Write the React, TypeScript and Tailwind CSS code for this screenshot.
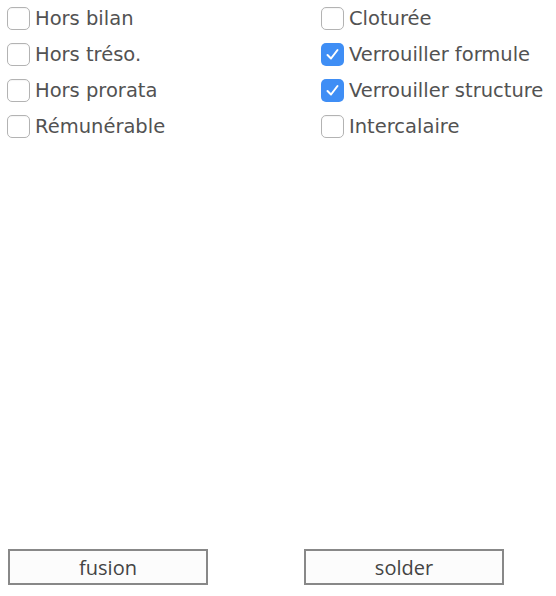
import React from "react";

const Check = ({ checked, label }: { checked?: boolean; label: string }) => (
  <div className="flex items-center h-[36px]">
    {checked ? (
      <span className="w-[23px] h-[23px] rounded-[5px] bg-[#3f8ef5] flex items-center justify-center shrink-0">
        <svg width="15" height="15" viewBox="0 0 15 15">
          <path d="M2.5 8 L6 11.5 L12.5 3" fill="none" stroke="white" strokeWidth="2" strokeLinecap="round" strokeLinejoin="round" />
        </svg>
      </span>
    ) : (
      <span className="w-[23px] h-[23px] rounded-[5px] border border-[#b3b3b3] bg-white shrink-0 shadow-[inset_0_1px_1px_rgba(0,0,0,0.04)]" />
    )}
    <span className="ml-[5px] text-[19.5px] text-[#525252] leading-none whitespace-nowrap pt-[1px]" style={{ fontFamily: '"DejaVu Sans", sans-serif' }}>
      {label}
    </span>
  </div>
);

export default function App() {
  return (
    <div className="w-[556px] h-[596px] bg-white flex flex-col">
      <div className="flex pt-0">
        <div className="w-[321px] pl-[7px]">
          <Check label="Hors bilan" />
          <Check label="Hors tréso." />
          <Check label="Hors prorata" />
          <Check label="Rémunérable" />
        </div>
        <div className="flex-1">
          <Check label="Cloturée" />
          <Check checked label="Verrouiller formule" />
          <Check checked label="Verrouiller structure" />
          <Check label="Intercalaire" />
        </div>
      </div>
      <div className="flex-1" />
      <div className="flex pl-[8px] gap-[96px] pb-[11px]">
        <button className="w-[200px] h-[36px] border-2 border-[#888] bg-[#fcfcfc] text-[20px] text-[#444] pt-[2px]" style={{ fontFamily: '"Open Sans", sans-serif' }}>
          fusion
        </button>
        <button className="w-[200px] h-[36px] border-2 border-[#888] bg-[#fcfcfc] text-[20px] text-[#444] pt-[2px]" style={{ fontFamily: '"Open Sans", sans-serif' }}>
          solder
        </button>
      </div>
    </div>
  );
}
